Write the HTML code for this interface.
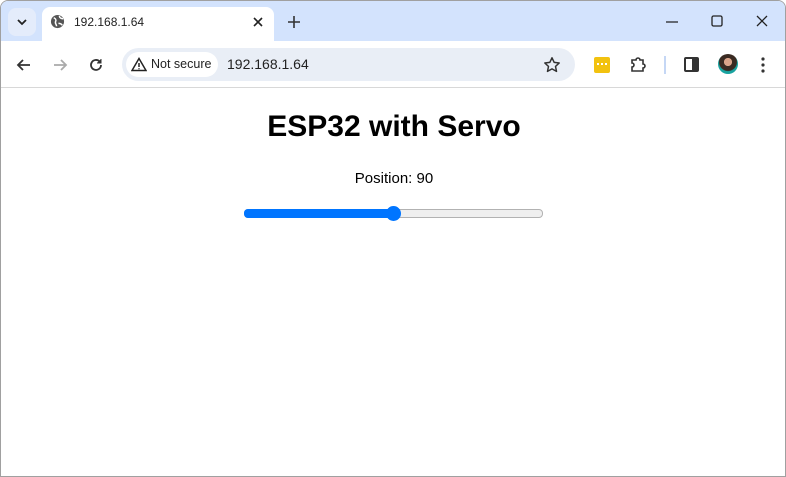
<!DOCTYPE html>
<html><head><style>
*{margin:0;padding:0;box-sizing:border-box}
body{width:786px;height:477px;overflow:hidden;background:#fff;font-family:"Liberation Sans",sans-serif;position:relative}
.win{position:absolute;left:0;top:0;width:786px;height:477px;border:1px solid #a0a0a0;border-radius:8px 8px 0 0;overflow:hidden}
.strip{position:absolute;left:0;top:0;width:786px;height:41px;background:#d3e3fd}
.abs{position:absolute}
.tab{left:41px;top:6px;width:232px;height:36px;background:#fff;border-radius:8px 8px 0 0}
.tb{left:0;top:40px;width:786px;height:47px;background:#fff;border-bottom:1px solid #d8d8d8}
.pill{left:121px;top:47px;width:453px;height:33px;background:#e9eef6;border-radius:17px}
.ns{left:125px;top:51px;width:92px;height:25px;background:#fff;border-radius:13px}
svg{position:absolute}
</style></head><body>
<div class="win">
<div class="strip"></div>
<div class="abs" style="left:7px;top:7px;width:28px;height:28px;background:#e4ecfb;border-radius:8px"></div>
<svg style="left:14px;top:14px" width="14" height="14"><path d="M3 5l4 4 4-4" stroke="#222" stroke-width="1.8" fill="none"/></svg>
<div class="abs tab"></div>
<svg style="left:49px;top:13px" width="15" height="15" viewBox="0 0 16 16"><circle cx="8" cy="8" r="7" fill="#555"/><path d="M4 4c2 1 3 2 2 4s1 3 1 5M10 2c0 2 2 3 4 3M9 10c1 0 3 0 4 2" stroke="#fff" stroke-width="1.6" fill="none"/></svg>
<div class="abs" style="left:73px;top:14px;font-size:12px;color:#222">192.168.1.64</div>
<svg style="left:251px;top:15px" width="12" height="12"><path d="M2 2l8 8M10 2l-8 8" stroke="#222" stroke-width="1.6"/></svg>
<svg style="left:286px;top:14px" width="14" height="14"><path d="M7 1v12M1 7h12" stroke="#333" stroke-width="1.6"/></svg>
<svg style="left:664px;top:14px" width="14" height="14"><path d="M1 7h12" stroke="#222" stroke-width="1.3"/></svg>
<svg style="left:709px;top:13px" width="14" height="14"><rect x="2" y="2" width="10" height="10" rx="1.5" stroke="#222" stroke-width="1.3" fill="none"/></svg>
<svg style="left:754px;top:13px" width="14" height="14"><path d="M2 2l10 10M12 2L2 12" stroke="#222" stroke-width="1.3"/></svg>
<div class="abs tb"></div>
<svg style="left:14px;top:56px" width="18" height="16"><path d="M15 8H3M8 3L3 8l5 5" stroke="#333" stroke-width="1.8" fill="none"/></svg>
<svg style="left:50px;top:56px" width="18" height="16"><path d="M3 8h12M10 3l5 5-5 5" stroke="#aaa" stroke-width="1.8" fill="none"/></svg>
<svg style="left:86px;top:55px" width="18" height="18"><path d="M14 9a5 5 0 1 1-1.5-3.6" stroke="#333" stroke-width="1.8" fill="none"/><path d="M14 3v4h-4" fill="#333" stroke="#333" stroke-width="1"/></svg>
<div class="abs pill"></div>
<div class="abs ns"></div>
<svg style="left:130px;top:56px" width="16" height="15"><path d="M8 1.5L15 13.5H1z" stroke="#222" stroke-width="1.5" fill="none"/><path d="M8 6v4M8 11.3v1" stroke="#222" stroke-width="1.5"/></svg>
<div class="abs" style="left:150px;top:56px;font-size:12.5px;color:#222">Not secure</div>
<div class="abs" style="left:226px;top:55px;font-size:14px;color:#222">192.168.1.64</div>
<svg style="left:542px;top:55px" width="18" height="18" viewBox="0 0 18 18"><path d="M9 1.8l2.2 4.6 5 .6-3.7 3.4 1 5L9 12.9 4.5 15.4l1-5L1.8 7l5-.6z" stroke="#333" stroke-width="1.5" fill="none" stroke-linejoin="round"/></svg>
<div class="abs" style="left:593px;top:56px;width:16px;height:16px;background:#f2c20f;border-radius:2px"></div>
<div class="abs" style="left:596px;top:62px;width:10px;height:3px;border-top:2px dotted #fff"></div>
<svg style="left:628px;top:55px" width="18" height="18"><path d="M3 4h4a2 2 0 0 1 4 0h3v4a2 2 0 0 1 0 4v3H3v-4a2 2 0 0 0 0-4z" stroke="#333" stroke-width="1.6" fill="none"/></svg>
<div class="abs" style="left:663px;top:55px;width:2px;height:18px;background:#c5d7f5"></div>
<div class="abs" style="left:683px;top:56px;width:15px;height:15px;border:2px solid #333;border-radius:2px;background:linear-gradient(90deg,#fff 55%,#333 55%)"></div>
<div class="abs" style="left:717px;top:53px;width:20px;height:20px;border-radius:50%;background:radial-gradient(circle at 50% 40%,#d9a38a 25%,#3a2a22 27%,#3a2a22 55%,#19a3a0 60%)"></div>
<svg style="left:758px;top:55px" width="8" height="18"><circle cx="4" cy="3" r="1.6" fill="#333"/><circle cx="4" cy="9" r="1.6" fill="#333"/><circle cx="4" cy="15" r="1.6" fill="#333"/></svg>
<div class="abs" style="left:0;top:109px;width:786px;text-align:center;font-size:30px;font-weight:bold;color:#000">ESP32 with Servo</div>
<div class="abs" style="left:0;top:169px;width:786px;text-align:center;font-size:15px;color:#000">Position: 90</div>
<div class="abs" style="left:243px;top:208px;width:299px;height:9px;border:1px solid #b2b2b2;background:#efefef;border-radius:4px"></div>
<div class="abs" style="left:243px;top:208px;width:150px;height:9px;background:#0075ff;border-radius:4px"></div>
<div class="abs" style="left:385px;top:205px;width:15px;height:15px;background:#0075ff;border-radius:50%"></div>
</div>
</body></html>
